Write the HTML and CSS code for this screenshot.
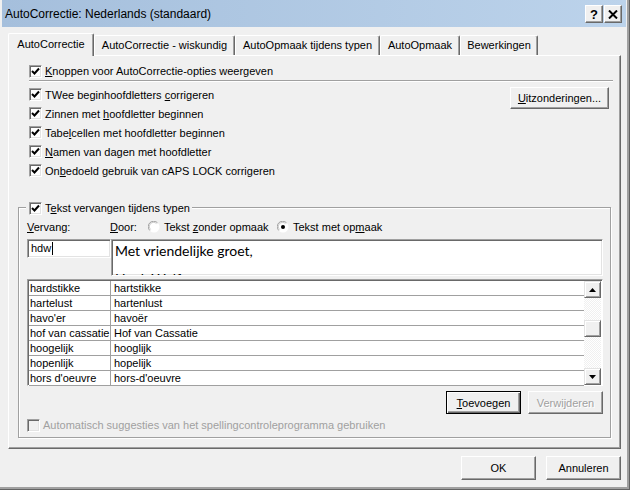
FILE: index.html
```html
<!DOCTYPE html>
<html lang="nl">
<head>
<meta charset="utf-8">
<title>AutoCorrectie</title>
<link rel="stylesheet" href="styles.css">
</head>
<body>
<div class="window">
  <div class="titlebar">
    <span class="title">AutoCorrectie: Nederlands (standaard)</span>
    <div class="cap-btns">
      <span class="cap-btn help">?</span>
      <span class="cap-btn close"><svg width="10" height="9" viewBox="0 0 10 9"><path d="M1 0.5 L9 8.5 M9 0.5 L1 8.5" stroke="#000" stroke-width="2"/></svg></span>
    </div>
  </div>
  <div class="client">
    <div class="tabs">
      <div class="tab active t1">AutoCorrectie</div>
      <div class="tab t2">AutoCorrectie - wiskundig</div>
      <div class="tab t3">AutoOpmaak tijdens typen</div>
      <div class="tab t4">AutoOpmaak</div>
      <div class="tab t5">Bewerkingen</div>
    </div>
    <div class="panel">
      <div class="opts">
        <div class="cb-row first"><span class="cb"><svg width="9" height="9" viewBox="0 0 9 9"><path d="M1 4 L3.5 6.5 L8 1.5" fill="none" stroke="#000" stroke-width="2"/></svg></span><span class="lbl"><u>K</u>noppen voor AutoCorrectie-opties weergeven</span></div>
        <div class="sep"></div>
        <div class="rows">
          <div class="cb-row"><span class="cb"><svg width="9" height="9" viewBox="0 0 9 9"><path d="M1 4 L3.5 6.5 L8 1.5" fill="none" stroke="#000" stroke-width="2"/></svg></span><span class="lbl">TWee beginhoofdletters <u>c</u>orrigeren</span><button class="btn exc"><u>U</u>itzonderingen...</button></div>
          <div class="cb-row"><span class="cb"><svg width="9" height="9" viewBox="0 0 9 9"><path d="M1 4 L3.5 6.5 L8 1.5" fill="none" stroke="#000" stroke-width="2"/></svg></span><span class="lbl">Zinnen met <u>h</u>oofdletter beginnen</span></div>
          <div class="cb-row"><span class="cb"><svg width="9" height="9" viewBox="0 0 9 9"><path d="M1 4 L3.5 6.5 L8 1.5" fill="none" stroke="#000" stroke-width="2"/></svg></span><span class="lbl">Tabe<u>l</u>cellen met hoofdletter beginnen</span></div>
          <div class="cb-row"><span class="cb"><svg width="9" height="9" viewBox="0 0 9 9"><path d="M1 4 L3.5 6.5 L8 1.5" fill="none" stroke="#000" stroke-width="2"/></svg></span><span class="lbl"><u>N</u>amen van dagen met hoofdletter</span></div>
          <div class="cb-row"><span class="cb"><svg width="9" height="9" viewBox="0 0 9 9"><path d="M1 4 L3.5 6.5 L8 1.5" fill="none" stroke="#000" stroke-width="2"/></svg></span><span class="lbl">On<u>b</u>edoeld gebruik van cAPS LOCK corrigeren</span></div>
        </div>
      </div>
      <div class="group">
        <div class="legend"><span class="cb"><svg width="9" height="9" viewBox="0 0 9 9"><path d="M1 4 L3.5 6.5 L8 1.5" fill="none" stroke="#000" stroke-width="2"/></svg></span><span class="lbl">T<u>e</u>kst vervangen tijdens typen</span></div>
        <div class="labels">
          <span class="lab-vervang"><u>V</u>ervang:</span>
          <span class="lab-door"><u>D</u>oor:</span>
          <span class="radio"><svg width="12" height="12" viewBox="0 0 12 12"><circle cx="6" cy="6" r="5.5" fill="#fff"/><path d="M1.8 9.5 A5 5 0 0 1 9.5 1.8" fill="none" stroke="#a0a0a0" stroke-width="1"/><path d="M2.6 8.5 A4 4 0 0 1 8.5 2.6" fill="none" stroke="#696969" stroke-width="1" opacity="0.35"/></svg></span>
          <span class="rlbl r1">Tekst <u>z</u>onder opmaak</span>
          <span class="radio"><svg width="12" height="12" viewBox="0 0 12 12"><circle cx="6" cy="6" r="5.5" fill="#fff"/><path d="M1.8 9.5 A5 5 0 0 1 9.5 1.8" fill="none" stroke="#a0a0a0" stroke-width="1"/><path d="M2.6 8.5 A4 4 0 0 1 8.5 2.6" fill="none" stroke="#696969" stroke-width="1" opacity="0.35"/><circle cx="6" cy="6" r="2" fill="#000"/></svg></span>
          <span class="rlbl">Tekst met op<u>m</u>aak</span>
        </div>
        <div class="editrow">
          <div class="edit small">hdw<span class="caret"></span></div>
          <div class="edit big"><p class="l1">Met vriendelijke groet,</p><p class="l2">Henk Wolf</p></div>
        </div>
        <div class="list">
          <div class="list-body">
            <div class="lrow"><span class="c1">hardstikke</span><span class="c2">hartstikke</span></div>
            <div class="lrow"><span class="c1">hartelust</span><span class="c2">hartenlust</span></div>
            <div class="lrow"><span class="c1">havo'er</span><span class="c2">havoër</span></div>
            <div class="lrow"><span class="c1">hof van cassatie</span><span class="c2">Hof van Cassatie</span></div>
            <div class="lrow"><span class="c1">hoogelijk</span><span class="c2">hooglijk</span></div>
            <div class="lrow"><span class="c1">hopenlijk</span><span class="c2">hopelijk</span></div>
            <div class="lrow"><span class="c1">hors d'oeuvre</span><span class="c2">hors-d'oeuvre</span></div>
          </div>
          <div class="vscroll">
            <span class="sb-btn"><svg width="7" height="4" viewBox="0 0 7 4"><path d="M3.5 0 L7 4 L0 4 Z" fill="#000"/></svg></span>
            <span class="sb-track top"></span>
            <span class="sb-thumb"></span>
            <span class="sb-track bottom"></span>
            <span class="sb-btn"><svg width="7" height="4" viewBox="0 0 7 4"><path d="M0 0 L7 0 L3.5 4 Z" fill="#000"/></svg></span>
          </div>
        </div>
        <div class="btnrow">
          <button class="btn default"><u>T</u>oevoegen</button>
          <button class="btn disabled">Verwijderen</button>
        </div>
        <div class="cb-row auto"><span class="cb dis"></span><span class="lbl dis">Automatisch suggesties van het spellingcontroleprogramma gebruiken</span></div>
      </div>
    </div>
    <div class="footer">
      <button class="btn foot">OK</button>
      <button class="btn foot">Annuleren</button>
    </div>
  </div>
</div>
</body>
</html>
```

FILE: styles.css
```css
* { box-sizing: border-box; }

html, body {
  margin: 0;
  padding: 0;
  background: #f0f0f0;
}

body {
  font-family: "Liberation Sans", Arial, sans-serif;
  font-size: 11px;
  color: #000;
}

u { text-decoration: underline; text-underline-offset: 1px; }

.window {
  width: 630px;
  height: 490px;
  background: #f0f0f0;
  display: flex;
  flex-direction: column;
  border-right: 1px solid #646464;
  border-bottom: 1px solid #646464;
  box-shadow: inset -2px -2px 0 #a0a0a0;
}

/* title bar */
.titlebar {
  height: 27px;
  margin: 0 3px 0 2px;
  background: linear-gradient(to right, #a5bfdc, #bcd3eb);
  display: flex;
  align-items: center;
  padding: 0 4px 0 3px;
}

.title {
  font-size: 12px;
  color: #000;
}

.cap-btns {
  margin-left: auto;
  display: flex;
  gap: 1px;
  margin-top: 1px;
}

.cap-btn {
  width: 18px;
  height: 18px;
  background: #f0f0f0;
  border: 1px solid;
  border-color: #fff #696969 #696969 #fff;
  box-shadow: inset -1px -1px #a0a0a0;
  display: flex;
  align-items: center;
  justify-content: center;
  font-weight: bold;
  font-size: 13px;
}

/* client */
.client {
  flex: 1;
  padding: 5px 0 0 8px;
  display: flex;
  flex-direction: column;
}

.tabs {
  display: flex;
  height: 23px;
  align-items: flex-end;
  position: relative;
  z-index: 1;
}

.tab {
  height: 20px;
  background: #f0f0f0;
  border-top: 1px solid #fff;
  border-left: 1px solid #fff;
  border-right: 1px solid #696969;
  box-shadow: inset -1px 0 #a0a0a0;
  display: flex;
  align-items: center;
  justify-content: center;
  padding-bottom: 1px;
  border-radius: 2px 2px 0 0;
}

.tab.active {
  height: 23px;
  margin-bottom: -1px;
  padding-bottom: 3px;
}

.t1 { width: 86px; }
.t2 { width: 141px; }
.t3 { width: 145px; }
.t4 { width: 80px; }
.t5 { width: 78px; }

.panel {
  width: 613px;
  height: 394px;
  border-top: 1px solid #fff;
  border-left: 1px solid #fff;
  border-right: 1px solid #696969;
  border-bottom: 1px solid #696969;
  box-shadow: inset -1px -1px #a0a0a0;
}

.opts {
  padding: 0 7px 0 20px;
}

.cb-row {
  display: flex;
  align-items: center;
  height: 19px;
}

.cb-row.first {
  height: 18px;
  margin-top: 6px;
}

.cb {
  width: 13px;
  height: 13px;
  flex: none;
  background: #fff;
  border: 1px solid;
  border-color: #a0a0a0 #fff #fff #a0a0a0;
  box-shadow: inset 1px 1px #696969, inset -1px -1px #e3e3e3;
  display: flex;
  align-items: center;
  justify-content: center;
}

.cb svg { display: block; }

.cb.dis {
  background: #f0f0f0;
}

.lbl {
  margin-left: 3px;
  white-space: nowrap;
}

.lbl.dis { color: #a0a0a0; }

.sep {
  height: 2px;
  border-top: 1px solid #a0a0a0;
  border-bottom: 1px solid #fff;
}

.rows {
  margin-top: 3px;
}

.btn {
  font-family: "Liberation Sans", Arial, sans-serif;
  font-size: 11px;
  color: #000;
  background: #f0f0f0;
  border: 1px solid;
  border-color: #fff #696969 #696969 #fff;
  box-shadow: inset -1px -1px #a0a0a0;
  padding: 0;
  margin: 0;
  height: 23px;
}

.btn.exc {
  margin-left: auto;
  margin-right: 4px;
  margin-top: 6px;
  width: 99px;
  height: 22px;
}

.btn.default {
  border: 1px solid #000;
  box-shadow: inset 1px 1px #fff, inset -1px -1px #696969, inset -2px -2px #a0a0a0;
}

.btn.disabled {
  color: #a0a0a0;
  text-shadow: 1px 1px #fff;
}

/* group box */
.group {
  margin: 27px 0 0 9px;
  width: 593px;
  height: 231px;
  border: 1px solid #a0a0a0;
  box-shadow: inset 1px 1px #fff, 1px 1px #fff;
  padding: 0 7px 0 8px;
}

.legend {
  display: flex;
  align-items: center;
  height: 16px;
  margin-top: -8px;
  margin-left: -1px;
  padding: 0 2px 0 3px;
  background: #f0f0f0;
  width: fit-content;
}

.labels {
  display: flex;
  align-items: center;
  height: 16px;
  margin-top: 3px;
}

.lab-vervang { width: 83px; }
.lab-door { width: 38px; }

.radio { width: 12px; height: 12px; display: flex; }
.radio svg { display: block; }

.rlbl { margin-left: 4px; }
.rlbl.r1 { width: 113px; }

.editrow {
  display: flex;
  margin-top: 4px;
  height: 37px;
}

.edit {
  background: #fff;
  border: 1px solid;
  border-color: #a0a0a0 #fff #fff #a0a0a0;
  box-shadow: inset 1px 1px #696969, inset -1px -1px #e3e3e3;
}

.edit.small {
  width: 84px;
  height: 19px;
  padding: 2px 0 0 3px;
  display: flex;
  align-items: flex-start;
  line-height: 13px;
}

.caret {
  width: 1px;
  height: 13px;
  background: #000;
  margin-left: 1px;
}

.edit.big {
  flex: 1;
  height: 37px;
  overflow: hidden;
  padding: 2px 4px 0 3px;
  font-family: Lato, "Liberation Sans", sans-serif;
  font-size: 14px;
}

.edit.big p {
  margin: 0;
  line-height: 17px;
}

.edit.big .l2 { margin-top: 11px; }

/* list */
.list {
  margin-top: 3px;
  height: 107px;
  display: flex;
  background: #fff;
  border: 1px solid;
  border-color: #a0a0a0 #fff #fff #a0a0a0;
  box-shadow: inset 1px 1px #696969;
  padding: 1px 1px 0 1px;
}

.list-body {
  flex: 1;
}

.lrow {
  display: flex;
  height: 15px;
  border-bottom: 1px solid #a0a0a0;
  line-height: 14px;
}

.c1 {
  width: 82px;
  padding-left: 1px;
  border-right: 1px solid #a0a0a0;
  white-space: nowrap;
  overflow: hidden;
}

.c2 {
  padding-left: 3px;
}

.vscroll {
  width: 17px;
  display: flex;
  flex-direction: column;
}

.sb-btn, .sb-thumb {
  height: 17px;
  flex: none;
  background: #f0f0f0;
  border: 1px solid;
  border-color: #e3e3e3 #696969 #696969 #e3e3e3;
  box-shadow: inset 1px 1px #fff, inset -1px -1px #a0a0a0;
  display: flex;
  align-items: center;
  justify-content: center;
}

.sb-track {
  background: repeating-conic-gradient(#f0f0f0 0 25%, #fff 0 50%) 0 0 / 2px 2px;
}

.sb-track.top { height: 22px; }
.sb-track.bottom { flex: 1; }

.btnrow {
  display: flex;
  justify-content: flex-end;
  gap: 7px;
  margin-top: 5px;
}

.btnrow .btn { width: 75px; height: 23px; }

.cb-row.auto {
  margin-top: 3px;
  height: 16px;
}

/* footer */
.footer {
  display: flex;
  justify-content: flex-end;
  gap: 10px;
  width: 613px;
  margin-top: 7px;
}

.btn.foot {
  width: 75px;
  height: 24px;
}
```
